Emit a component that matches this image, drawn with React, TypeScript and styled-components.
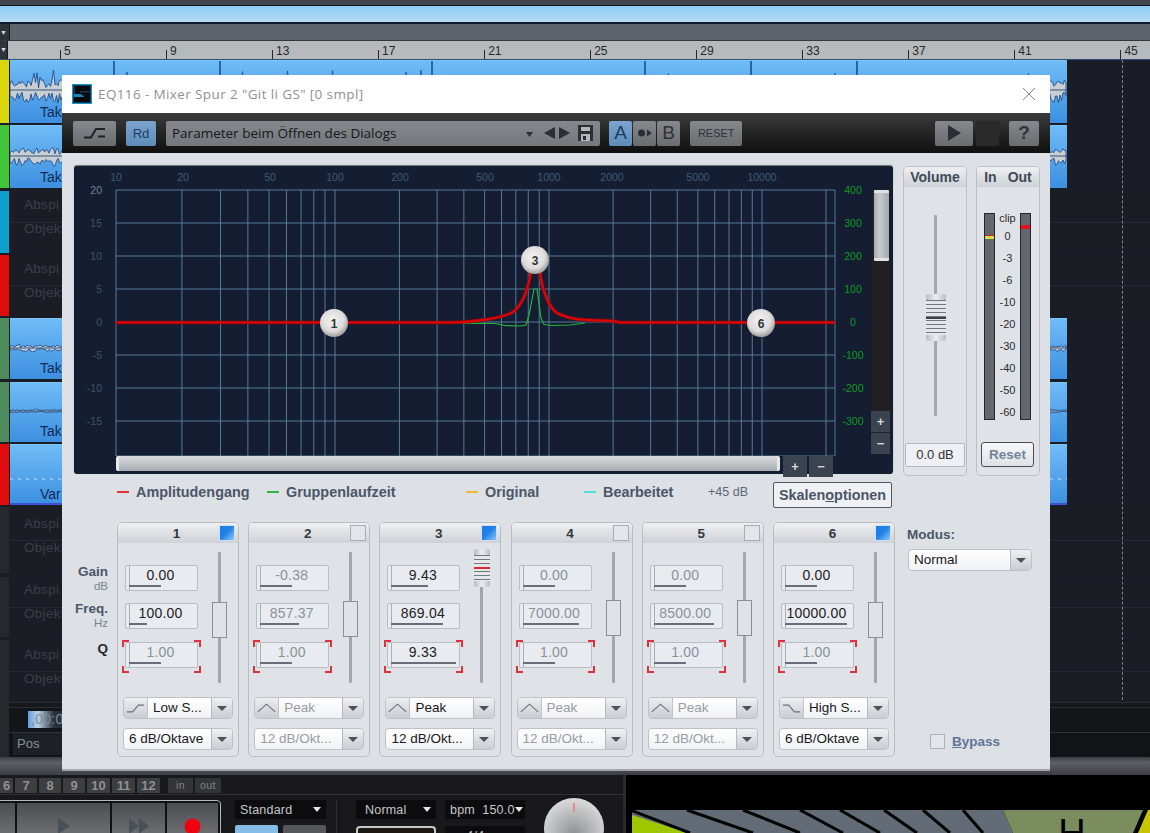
import React from 'react';
import styled, { createGlobalStyle } from 'styled-components';

const GlobalStyle = createGlobalStyle`
  html, body { margin: 0; padding: 0; background: #000; overflow: hidden; }
  body { font-family: "Liberation Sans", Arial, sans-serif; }
  * { box-sizing: border-box; }
`;

const LABEL = '#4b5668';

const corners = (c: string) => `
  linear-gradient(${c},${c}) left top/7px 2px no-repeat,
  linear-gradient(${c},${c}) left top/2px 7px no-repeat,
  linear-gradient(${c},${c}) right top/7px 2px no-repeat,
  linear-gradient(${c},${c}) right top/2px 7px no-repeat,
  linear-gradient(${c},${c}) left bottom/7px 2px no-repeat,
  linear-gradient(${c},${c}) left bottom/2px 7px no-repeat,
  linear-gradient(${c},${c}) right bottom/7px 2px no-repeat,
  linear-gradient(${c},${c}) right bottom/2px 7px no-repeat
`;

const S = {
  Desktop: styled.div`
    position: relative;
    width: 1150px;
    height: 833px;
    overflow: hidden;
    background: #1a1d25;
  `,
  TopStrip: styled.div`
    height: 24px;
    background: linear-gradient(#42464c 0 5px, #14161a 5px 6px, #8ecbf4 6px, #b4dcf4 22px, #101a2c 22px);
  `,
  GrayBar: styled.div`
    height: 17px;
    display: flex;
    background: #5e646d;
    border-bottom: 1px solid #33373d;
  `,
  CornerCell: styled.div`
    width: 10px;
    background: #30343a;
    border-right: 1px solid #16181c;
    color: #d5d8dc;
    font-size: 7px;
    line-height: 17px;
  `,
  Ruler: styled.div`
    height: 19px;
    display: flex;
    background: #b7babd;
    border-bottom: 1px solid #2e4d78;
  `,
  RulerTicks: styled.div`
    display: flex;
    padding-left: 52px;
  `,
  RulerMark: styled.div`
    width: 106.05px;
    height: 18px;
    padding: 3px 0 0 4px;
    font-size: 12px;
    line-height: 14px;
    color: #25282c;
    background: linear-gradient(#25282c, #25282c) left 9px/1px 9px no-repeat;
  `,
  Tracks: styled.div`
    height: 642px;
    display: flex;
    flex-direction: column;
  `,
  Row: styled.div<{ $h: number; $gap: number }>`
    height: ${(p) => p.$h}px;
    margin-bottom: ${(p) => p.$gap}px;
    display: flex;
    flex: none;
  `,
  Strip: styled.div<{ $c: string }>`
    width: 9px;
    margin-right: 1px;
    background: ${(p) => p.$c};
  `,
  Lane: styled.div<{ $pt: number }>`
    flex: 1;
    padding: ${(p) => p.$pt}px 0 0 14px;
    background: linear-gradient(#262931, #262931) 0 50%/100% 1px no-repeat, #1b1d24;
    color: #3b3f4a;
    font-size: 13.5px;
    line-height: 24px;
    letter-spacing: 0.3px;
    white-space: pre-line;
  `,
  Clip: styled.div`
    width: 1057px;
    display: grid;
    background: linear-gradient(#6fbcf7, #3d8fe0);
    border-top: 1px solid #7dc6f8;
    & > * { grid-area: 1 / 1; }
  `,
  ClipLabel: styled.div`
    align-self: end;
    padding: 0 0 3px 30px;
    font-size: 14px;
    line-height: 16px;
    color: #0e2c58;
  `,
  Dashed: styled.div`
    position: absolute;
    left: 1122px;
    top: 60px;
    height: 640px;
    border-left: 1px dashed #7c828a;
  `,
  Transportline: styled.div`
    height: 55px;
    display: flex;
    background: linear-gradient(#2a2d33 0 1px, #17181c 1px 5px, #2a2d33 5px 6px, #141519 6px 30px, #30333a 30px 31px, #121317 31px);
  `,
  TimeCol: styled.div`
    padding: 9px 0 0 3px;
    width: 1000px;
    display: flex;
    flex-direction: column;
    gap: 5px;
  `,
  TimeBox: styled.div`
    margin-left: 15px;
    width: 120px;
    height: 17px;
    padding-left: 3px;
    background: linear-gradient(90deg, #5f9ed8, #b9d3e6 10px, #27303a 26px);
    color: #7d8996;
    font-size: 14px;
    line-height: 17px;
    letter-spacing: 0.3px;
  `,
  PosBox: styled.div`
    margin-left: 0;
    width: 120px;
    height: 22px;
    padding-left: 4px;
    background: #1d2025;
    color: #8a929c;
    font-size: 13px;
    line-height: 22px;
  `,
  GrayStrip: styled.div`
    height: 18px;
    background: linear-gradient(#3a3d42, #5c6066 30%, #3b3e43);
  `,
  Bottom: styled.div`
    height: 58px;
    display: flex;
    background: #000;
  `,
  BottomLeft: styled.div`
    width: 626px;
    flex: none;
    overflow: hidden;
    background: #19191b;
    border-right: 3px solid #2a2a2c;
  `,
  TabRow: styled.div`
    height: 20px;
    padding-top: 3px;
    display: flex;
    border-bottom: 1px solid #333;
  `,
  TabCell: styled.div<{ $w: number; $ml?: number }>`
    width: ${(p) => p.$w}px;
    margin-left: ${(p) => p.$ml ?? 1}px;
    height: 15px;
    background: #3d3e41;
    color: #8f9093;
    font-size: 13px;
    font-weight: 700;
    line-height: 15px;
    text-align: center;
  `,
  TabCellSmall: styled.div<{ $w: number; $ml?: number }>`
    width: ${(p) => p.$w}px;
    margin-left: ${(p) => p.$ml ?? 1}px;
    height: 15px;
    background: #333437;
    color: #808185;
    font-size: 10.5px;
    line-height: 15px;
    text-align: center;
    letter-spacing: 0.5px;
  `,
  Controls: styled.div`
    display: flex;
    padding-top: 5px;
  `,
  Transport: styled.div`
    width: 224px;
    height: 60px;
    margin-left: -3px;
    padding: 2px 2px 0;
    flex: none;
    display: flex;
    gap: 2px;
    border: 1px solid #b5b7b9;
    border-radius: 4px;
    background: #111;
  `,
  TransportBtn: styled.div<{ $w: number }>`
    width: ${(p) => p.$w}px;
    height: 50px;
    padding-top: 15px;
    display: flex;
    justify-content: center;
    background: linear-gradient(#4c4d50, #66686b 50%, #76787b);
  `,
  DarkSelectCol: styled.div`
    width: 92px;
    margin-left: 14px;
    flex: none;
    display: flex;
    flex-direction: column;
    gap: 6px;
  `,
  DarkSelect: styled.div<{ $w: number; $pl?: number }>`
    width: ${(p) => p.$w}px;
    height: 19px;
    padding: 0 5px 0 ${(p) => p.$pl ?? 5}px;
    flex: none;
    display: flex;
    justify-content: space-between;
    align-items: center;
    background: #0c0c0e;
    color: #c5c7ca;
    font-size: 12.5px;
    letter-spacing: 0.2px;
    white-space: pre;
    &::after {
      content: '';
      border: 4px solid transparent;
      border-top: 5px solid #e5e5e5;
      border-bottom: 0;
    }
  `,
  SmallButtons: styled.div`
    display: flex;
    gap: 5px;
  `,
  SmallBtn: styled.div<{ $bg: string }>`
    width: 43px;
    height: 12px;
    border-radius: 2px 2px 0 0;
    background: ${(p) => p.$bg};
  `,
  Divider: styled.div`
    width: 1px;
    height: 40px;
    margin-left: 9px;
    background: #303033;
    flex: none;
  `,
  MidCol: styled.div`
    margin-left: 19px;
    width: 170px;
    flex: none;
    display: flex;
    flex-wrap: wrap;
    column-gap: 9px;
    row-gap: 7px;
    align-content: flex-start;
  `,
  Display: styled.div`
    width: 80px;
    height: 14px;
    border: 2px solid #c8c8c8;
    border-bottom: 0;
    border-radius: 4px 4px 0 0;
    background: #1c1710;
  `,
  Knob: styled.div`
    width: 60px;
    height: 60px;
    margin: -2px 0 0 18px;
    flex: none;
    border-radius: 50%;
    background: radial-gradient(circle at 50% 60%, #8f9092, #c5c6c8 55%, #f2f2f2);
    display: flex;
    justify-content: center;
    padding-top: 5px;
    &::after {
      content: '';
      width: 2px;
      height: 9px;
      background: #e28b8b;
    }
  `,
  BottomArt: styled.div`
    flex: 1;
    padding-left: 4px;
    display: flex;
    align-items: flex-end;
  `,

  Dialog: styled.div`
    position: absolute;
    left: 62px;
    top: 75px;
    width: 988px;
    height: 696px;
    display: flex;
    flex-direction: column;
    background: #dde0e5;
    border-bottom: 2px solid #a2a6ab;
  `,
  TitleBar: styled.div`
    height: 38px;
    flex: none;
    padding: 0 14px 0 10px;
    display: flex;
    align-items: center;
    background: #fff;
  `,
  TitleText: styled.div`
    margin-left: 6px;
    flex: 1;
    font-family: "Open Sans", "Liberation Sans", sans-serif;
    font-size: 13.5px;
    color: #919191;
    letter-spacing: 0.38px;
  `,
  Toolbar: styled.div`
    height: 40px;
    flex: none;
    padding: 0 11px;
    display: flex;
    align-items: center;
    background: linear-gradient(#3b3b3b, #0f0f0f);
  `,
  ToolBtn: styled.div<{ $w: number; $ml?: number; $blue?: boolean }>`
    width: ${(p) => p.$w}px;
    margin-left: ${(p) => p.$ml ?? 0}px;
    height: 25px;
    flex: none;
    display: flex;
    align-items: center;
    justify-content: center;
    border-radius: 2px;
    background: ${(p) => (p.$blue ? 'linear-gradient(#7ba4cf, #5f8cbb)' : 'linear-gradient(#85888c, #6a6c70)')};
    color: ${(p) => (p.$blue ? '#1d3c60' : '#2f3236')};
    font-size: 13px;
  `,
  ResetText: styled.span`
    font-size: 11.5px;
    transform: scaleX(0.95);
  `,
  AbLetter: styled.span`
    font-size: 19px;
  `,
  HelpMark: styled.span`
    font-size: 19px;
    font-weight: 700;
  `,
  DimBtn: styled.div<{ $ml: number }>`
    width: 23px;
    height: 25px;
    margin-left: ${(p) => p.$ml}px;
    flex: none;
    background: #2a2a2a;
  `,
  Combo: styled.div`
    width: 434px;
    height: 25px;
    margin-left: 10px;
    flex: none;
    padding: 0 4px 0 6px;
    display: flex;
    align-items: center;
    gap: 4px;
    border-radius: 2px;
    background: linear-gradient(#85888c, #74777b);
    color: #15171a;
    font-family: "Open Sans", "Liberation Sans", sans-serif;
    font-size: 13.5px;
  `,
  ComboText: styled.div`
    flex: 1;
  `,
  AbGroup: styled.div`
    display: flex;
    gap: 1px;
    margin-left: 9px;
  `,
  Spacer: styled.div`
    flex: 1;
  `,
  Body: styled.div`
    flex: 1;
    padding: 13px 0 0 12px;
    display: flex;
    flex-direction: column;
  `,
  UpperRow: styled.div`
    display: flex;
    height: 310px;
  `,
  Graph: styled.div`
    width: 819px;
    height: 308px;
    flex: none;
    display: grid;
    grid-template-columns: 797px 19px;
    grid-template-rows: 290px 17px;
    border-radius: 3px;
    background: #151d33;
    box-shadow: 0 -1px 1px #6e7278;
  `,
  VScroll: styled.div`
    margin-top: 24px;
    display: flex;
    flex-direction: column;
    gap: 1px;
    background: #211f22;
    margin-bottom: 2px;
  `,
  VTrack: styled.div`
    flex: 1;
    padding-left: 3px;
  `,
  VThumb: styled.div`
    width: 15px;
    height: 71px;
    border-radius: 1px;
    background: linear-gradient(90deg, #a9adb4, #c7cbd0 40%, #a4a8ae);
    border-top: 3px solid #dfe1e3;
    border-bottom: 3px solid #dfe1e3;
  `,
  ScrollBtn: styled.div<{ $w?: number }>`
    width: ${(p) => p.$w ?? 19}px;
    height: 21px;
    flex: none;
    display: flex;
    align-items: center;
    justify-content: center;
    background: #3b4250;
    color: #d5d9de;
    font-size: 13px;
    font-weight: 700;
  `,
  HScroll: styled.div`
    grid-column: 1 / 3;
    padding-left: 42px;
    display: flex;
    gap: 2px;
  `,
  HThumb: styled.div`
    width: 664px;
    height: 15px;
    margin-right: 1px;
    border-radius: 2px;
    background: linear-gradient(#dadcde, #a8acb0);
    border-left: 3px solid #e9eaec;
    border-right: 3px solid #e9eaec;
  `,
  SidePanel: styled.div<{ $ml: number }>`
    width: 64px;
    height: 310px;
    margin-left: ${(p) => p.$ml}px;
    flex: none;
    border: 1px solid #bcc0c6;
    border-radius: 5px;
    background: #dfe2e6;
  `,
  SideHead: styled.div`
    height: 20px;
    display: flex;
    align-items: center;
    justify-content: center;
    gap: 11px;
    border-radius: 4px 4px 0 0;
    background: linear-gradient(#eef0f2, #ced1d6);
    color: #3f4a58;
    font-size: 14px;
    font-weight: 700;
  `,
  VolumeArea: styled.div`
    position: relative;
    height: 201px;
    margin: 28px 0 27px;
    display: flex;
    justify-content: center;
  `,
  Track: styled.div`
    width: 3px;
    height: 100%;
    border-radius: 1px;
    background: #a2a7ae;
  `,
  FaderCap: styled.div<{ $w: number; $h: number; $top: number; $left: number }>`
    position: absolute;
    top: ${(p) => p.$top}px;
    left: ${(p) => p.$left}px;
    width: ${(p) => p.$w}px;
    height: ${(p) => p.$h}px;
    padding: 6px 0;
    display: flex;
    border-radius: 2px;
    background: linear-gradient(90deg, #b9bdc4, #eceef0 50%, #b9bdc4);
  `,
  FaderStripes: styled.div<{ $mark: string }>`
    flex: 1;
    background:
      linear-gradient(${(p) => p.$mark}, ${(p) => p.$mark}) center / 100% 2px no-repeat,
      repeating-linear-gradient(#72777f 0 1.5px, #e4e6e9 1.5px 4px);
  `,
  ValueBox: styled.div`
    width: 60px;
    height: 24px;
    margin-left: 1px;
    border: 1px solid #b4b8be;
    border-radius: 2px;
    background: #eef0f3;
    color: #333;
    font-size: 13px;
    line-height: 22px;
    text-align: center;
  `,
  MeterArea: styled.div`
    height: 207px;
    margin: 26px 0 22px;
    padding-left: 7px;
    display: flex;
  `,
  Meter: styled.div`
    width: 11px;
    height: 100%;
    flex: none;
    border: 1px solid #25272b;
    background: #63676e;
  `,
  MeterMark: styled.div<{ $top: number; $bg: string; $h: number }>`
    height: ${(p) => p.$h}px;
    margin-top: ${(p) => p.$top}px;
    background: ${(p) => p.$bg};
  `,
  Scale: styled.div`
    width: 25px;
    flex: none;
    display: flex;
    flex-direction: column;
    align-items: center;
    color: #2a2c30;
    font-size: 11px;
  `,
  ScaleClip: styled.div`
    height: 11px;
    margin-bottom: 1px;
    line-height: 11px;
  `,
  ScaleTick: styled.div`
    height: 22px;
    line-height: 22px;
  `,
  ResetBtn: styled.div`
    width: 53px;
    height: 25px;
    margin-left: 4px;
    border: 1px solid #4a4d52;
    border-radius: 3px;
    background: linear-gradient(#f6f7f8, #dfe2e6);
    color: #72839a;
    font-size: 13.5px;
    font-weight: 700;
    line-height: 23px;
    text-align: center;
  `,
  Legend: styled.div`
    height: 26px;
    margin-top: 6px;
    padding-left: 43px;
    display: flex;
  `,
  LegendItem: styled.div<{ $w: number }>`
    width: ${(p) => p.$w}px;
    height: 20px;
    flex: none;
    display: flex;
    align-items: center;
    gap: 7px;
    color: ${LABEL};
    font-size: 14.4px;
    font-weight: 700;
  `,
  LegendDash: styled.span<{ $c: string }>`
    width: 12px;
    height: 2px;
    background: ${(p) => p.$c};
  `,
  LegendPlain: styled.span`
    color: #5d6777;
    font-size: 12.5px;
    font-weight: 400;
  `,
  ScaleOptions: styled.div`
    width: 119px;
    height: 26px;
    flex: none;
    border: 1px solid #54585e;
    border-radius: 2px;
    background: #eef0f3;
    color: ${LABEL};
    font-size: 14.4px;
    font-weight: 700;
    line-height: 24px;
    text-align: center;
    white-space: nowrap;
  `,
  LowerRow: styled.div`
    margin-top: 14px;
    display: flex;
  `,
  RowLabels: styled.div`
    width: 43px;
    flex: none;
    padding: 42px 9px 0 0;
    display: flex;
    flex-direction: column;
    align-items: flex-end;
    font-size: 13.5px;
    font-weight: 700;
    color: ${LABEL};
  `,
  RowLabel: styled.div`
    height: 37px;
    line-height: 15px;
    text-align: right;
    white-space: nowrap;
  `,
  RowUnit: styled.div`
    color: #7b8290;
    font-size: 11.5px;
    font-weight: 400;
  `,
  RowQ: styled.div`
    height: 15px;
    margin-top: 3px;
    line-height: 15px;
    color: #23272e;
  `,
  Bands: styled.div`
    display: grid;
    grid-template-columns: repeat(6, 122px);
    column-gap: 9.2px;
  `,
  Band: styled.div`
    height: 235px;
    border: 1px solid #b9bdc3;
    border-radius: 5px;
    background: #dfe2e6;
  `,
  BandHead: styled.div`
    height: 20px;
    padding-right: 3px;
    display: grid;
    grid-template-columns: 1fr auto 1fr;
    align-items: center;
    border-radius: 4px 4px 0 0;
    background: linear-gradient(#eef0f2, #ced1d6);
    color: #33373d;
    font-size: 13.5px;
    font-weight: 700;
  `,
  Check: styled.div<{ $on: boolean }>`
    width: 16px;
    height: 16px;
    justify-self: end;
    border: 1px solid ${(p) => (p.$on ? '#cfe0f2' : '#a9adb3')};
    background: ${(p) => (p.$on ? 'linear-gradient(135deg, #1f7fe6 45%, #8ac6f7)' : '#e2e5e9')};
  `,
  BandMain: styled.div`
    height: 140px;
    padding-left: 7px;
    display: flex;
  `,
  Fields: styled.div`
    width: 73px;
    padding-top: 22px;
    display: flex;
    flex-direction: column;
    gap: 12px;
    flex: none;
  `,
  Field: styled.div<{ $dim?: boolean }>`
    position: relative;
    width: 73px;
    height: 26px;
    padding-right: 2px;
    border: 1px solid #b9bdc4;
    border-radius: 2px;
    background: linear-gradient(90deg, #a9adb5 0 1px, transparent 1px) 3px 0 no-repeat, #e8ebef;
    color: ${(p) => (p.$dim ? '#8c919a' : '#1f2226')};
    font-size: 14px;
    letter-spacing: 0.2px;
    line-height: 19px;
    text-align: center;
  `,
  FieldBar: styled.div<{ $w: number }>`
    position: absolute;
    left: 3px;
    bottom: 3px;
    width: ${(p) => p.$w}px;
    height: 2px;
    background: #696d7a;
  `,
  QFrame: styled.div`
    margin: -1px -3px -5px;
    padding: 2px 3px 5px;
    background: ${corners('#e0303c')};
  `,
  SliderCol: styled.div`
    position: relative;
    width: 15px;
    height: 131px;
    margin: 9px 0 0 14px;
    display: flex;
    justify-content: center;
    flex: none;
  `,
  PlainThumb: styled.div<{ $top: number }>`
    position: absolute;
    top: ${(p) => p.$top}px;
    left: 0;
    width: 15px;
    height: 36px;
    border: 1px solid #8a8f97;
    background: #dfe2e6;
  `,
  Select: styled.div<{ $dim?: boolean; $w?: number; $mt: number }>`
    width: ${(p) => p.$w ?? 110}px;
    height: 22px;
    margin: ${(p) => p.$mt}px 0 0 5px;
    display: flex;
    overflow: hidden;
    border: 1px solid #bec2c8;
    border-radius: 4px;
    background: linear-gradient(#fff, #f1f2f4);
    color: ${(p) => (p.$dim ? '#979ca5' : '#17191c')};
    font-size: 13.5px;
    line-height: 20px;
  `,
  SelectIcon: styled.div`
    width: 24px;
    flex: none;
    display: flex;
    align-items: center;
    justify-content: center;
    background: linear-gradient(#eceef0, #c9ccd2);
    border-right: 1px solid #c0c4c9;
  `,
  SelectText: styled.div`
    flex: 1;
    padding-left: 5px;
    white-space: nowrap;
  `,
  SelectArrow: styled.div`
    width: 21px;
    flex: none;
    display: flex;
    align-items: center;
    justify-content: center;
    background: linear-gradient(#eff0f2, #c9ccd2);
    border-left: 1px solid #b5b9bf;
    &::after {
      content: '';
      border: 5px solid transparent;
      border-top: 5px solid #4d5158;
      border-bottom: 0;
    }
  `,
  ModusCol: styled.div`
    margin-left: 12px;
    height: 235px;
    flex: 1;
    padding-top: 5px;
    display: flex;
    flex-direction: column;
  `,
  ModusLabel: styled.div`
    color: ${LABEL};
    font-size: 13.5px;
    font-weight: 700;
    line-height: 16px;
    margin-bottom: 6px;
  `,
  ModusSelect: styled.div`
    margin-left: -4px;
  `,
  BypassRow: styled.div`
    margin: auto 0 8px 23px;
    display: flex;
    align-items: center;
    gap: 7px;
    color: #5f7597;
    font-size: 13.5px;
    font-weight: 700;
  `,
  BypassBox: styled.div`
    width: 15px;
    height: 15px;
    border: 1px solid #adb1b7;
    background: #e2e5e9;
  `,
};

// seeded noise so the waveform stays the same on each run
const wavePath = (seed: number, width: number, center: number, amp: number) => {
  let s = seed;
  const rnd = () => {
    s = (s * 16807) % 2147483647;
    return s / 2147483647;
  };
  const top: string[] = [];
  const bottom: string[] = [];
  for (let x = 0; x <= width; x += 1.5) {
    const spike = rnd() > 0.95 ? 1.9 : 1;
    const up = (0.15 + rnd() * 0.6) * amp * spike;
    const down = (0.15 + rnd() * 0.8) * amp;
    top.push(`${x},${(center - up).toFixed(1)}`);
    bottom.unshift(`${x},${(center + down).toFixed(1)}`);
  }
  return `M${top.join(' L')} L${bottom.join(' L')} Z`;
};

type WaveProps = { seed: number; h: number; center: number; amp: number; cuts?: boolean };

function Wave({ seed, h, center, amp, cuts }: WaveProps) {
  return (
    <svg width={1057} height={h} viewBox={`0 0 1057 ${h}`}>
      {amp > 0 ? (
        <>
          <path d={wavePath(seed, 1057, center, amp)} fill="#c9ced3" stroke="#1f4f8c" strokeWidth={0.9} />
          <line x1={0} x2={1057} y1={center} y2={center} stroke="#33557f" strokeWidth={1} />
        </>
      ) : (
        <>
          <line x1={0} x2={1057} y1={center} y2={center} stroke="#c5dcf2" strokeWidth={1} strokeDasharray="3 5" />
          <line x1={0} x2={1057} y1={h - 1} y2={h - 1} stroke="#3b3fd8" strokeWidth={1.5} />
        </>
      )}
      {cuts &&
        [104, 210, 422, 635, 741, 847].map((x) => (
          <line key={x} x1={x} x2={x} y1={0} y2={h} stroke="#17488c" strokeWidth={1.5} />
        ))}
    </svg>
  );
}

const tracks = [
  { color: '#dcd60c', h: 63, gap: 2, clip: { amp: 14, center: 29, label: 'Tak', cuts: true } },
  { color: '#43c53a', h: 63, gap: 3, clip: { amp: 11, center: 30, label: 'Tak', cuts: true } },
  { color: '#0c9fd0', h: 62, gap: 2, text: 'Abspi\nObjekt', pt: 2 },
  { color: '#e00c0c', h: 61, gap: 2, text: 'Abspi\nObjekt', pt: 2 },
  { color: '#4d8a5c', h: 61, gap: 3, clip: { amp: 4, center: 29, label: 'Tak' } },
  { color: '#4d8a5c', h: 60, gap: 2, clip: { amp: 2, center: 28, label: 'Tak' } },
  { color: '#e00c0c', h: 61, gap: 2, clip: { amp: 0, center: 34, label: 'Var' } },
  { color: '#25282d', h: 66, gap: 4, text: 'Abspi\nObjekt', pt: 5 },
  { color: '#25282d', h: 60, gap: 3, text: 'Abspi\nObjekt', pt: 1 },
  { color: '#25282d', h: 62, gap: 0, text: 'Abspi\nObjekt', pt: 3 },
];

const rulerMarks = [5, 9, 13, 17, 21, 25, 29, 33, 37, 41, 45];

const decades = [116, 335, 549, 762];
const gridX: number[] = [];
decades.slice(0, 3).forEach((start, i) => {
  const span = decades[i + 1] - start;
  for (let k = 1; k < 10; k++) gridX.push(start + Math.log10(k) * span);
});
gridX.push(762, 826, 835);
const gridY = [190, 223, 256, 289, 322, 355, 388, 421, 456];

const topLabels: [string, number][] = [
  ['10', 116], ['20', 183], ['50', 270], ['100', 335], ['200', 400],
  ['500', 485], ['1000', 549], ['2000', 612], ['5000', 698], ['10000', 762],
];
const leftLabels: [string, number][] = [
  ['20', 190], ['15', 223], ['10', 256], ['5', 289], ['0', 322], ['-5', 355], ['-10', 388], ['-15', 421],
];
const rightLabels: [string, number][] = [
  ['400', 190], ['300', 223], ['200', 256], ['100', 289], ['0', 322], ['-100', 355], ['-200', 388], ['-300', 421],
];

const nodes: [string, number, number][] = [
  ['1', 334, 323],
  ['3', 535, 260],
  ['6', 761, 323],
];

const RED_CURVE =
  'M116 322.5 L453 322.5 C470 322 480 320.5 490 319 C500 317 508 315 513 312 C518 308 521 304 524 297 C527 290 529 283 531 272 L533 262 L538 262 L540 272 C541 283 544 292 547 299 C550 306 553 310 557 313 C563 316 570 318.5 580 319.5 C590 320.5 605 320.5 613 321 L620 322.5 L835 322.5';
const GREEN_CURVE =
  'M453 323.5 L495 323.5 L505 325.5 L520 326 L526 325 L529 315 L534 289 L537 289 L541 318 L544 324.5 L552 325.5 L570 325 L585 323';

function EqChart() {
  return (
    <svg width={797} height={290} viewBox="74 166 797 290">
      <defs>
        <radialGradient id="ball" cx="45%" cy="40%" r="62%">
          <stop offset="0%" stopColor="#f4f3f3" />
          <stop offset="65%" stopColor="#dddbdb" />
          <stop offset="100%" stopColor="#989696" />
        </radialGradient>
      </defs>
      {gridX.map((x) => (
        <line key={x} x1={x} x2={x} y1={190} y2={456} stroke="#557a9a" strokeWidth={1} />
      ))}
      {gridY.map((y) => (
        <line key={y} x1={116} x2={835} y1={y} y2={y} stroke="#557a9a" strokeWidth={1} />
      ))}
      <g fontFamily="Liberation Sans, sans-serif" fontSize={10.5}>
        {topLabels.map(([t, x]) => (
          <text key={t} x={x} y={181} textAnchor="middle" fill="#3f5a78">{t}</text>
        ))}
        {leftLabels.map(([t, y]) => (
          <text key={t} x={102} y={y + 3.5} textAnchor="end" fill={t === '20' ? '#6f8296' : '#3f5268'}>{t}</text>
        ))}
        {rightLabels.map(([t, y]) => (
          <text key={t} x={853} y={y + 3.5} textAnchor="middle" fill="#0f9a1e">{t}</text>
        ))}
      </g>
      <path d={GREEN_CURVE} fill="none" stroke="#22b53a" strokeWidth={1.2} />
      <path d={RED_CURVE} fill="none" stroke="#8a0a10" strokeWidth={3.4} />
      <path d={RED_CURVE} fill="none" stroke="#e00404" strokeWidth={2} />
      {nodes.map(([n, x, y]) => (
        <g key={n}>
          <circle cx={x} cy={y} r={14} fill="url(#ball)" />
          <text x={x} y={y + 4.5} textAnchor="middle" fontFamily="Liberation Sans, sans-serif" fontWeight={700} fontSize={12} fill="#333">{n}</text>
        </g>
      ))}
    </svg>
  );
}

const CurveIcon = ({ type }: { type: string }) => {
  const d = type === 'low' ? 'M3 15 L9 15 L15 8 L21 8' : type === 'high' ? 'M3 8 L9 8 L15 15 L21 15' : 'M3 15 L12 7 L21 15';
  return (
    <svg width={24} height={22} viewBox="0 0 24 22">
      <path d={d} fill="none" stroke="#6c7077" strokeWidth={1.2} />
    </svg>
  );
};

const bands = [
  { n: 1, on: true, gain: '0.00', gw: 32, freq: '100.00', fw: 18, q: '1.00', qw: 32, type: 'Low S...', icon: 'low', slope: '6 dB/Oktave', thumb: 50 },
  { n: 2, on: false, gain: '-0.38', gw: 32, freq: '857.37', fw: 39, q: '1.00', qw: 32, type: 'Peak', icon: 'peak', slope: '12 dB/Okt...', thumb: 49 },
  { n: 3, on: true, gain: '9.43', gw: 37, freq: '869.04', fw: 52, q: '9.33', qw: 65, type: 'Peak', icon: 'peak', slope: '12 dB/Okt...', thumb: -3 },
  { n: 4, on: false, gain: '0.00', gw: 32, freq: '7000.00', fw: 56, q: '1.00', qw: 32, type: 'Peak', icon: 'peak', slope: '12 dB/Okt...', thumb: 48 },
  { n: 5, on: false, gain: '0.00', gw: 32, freq: '8500.00', fw: 60, q: '1.00', qw: 32, type: 'Peak', icon: 'peak', slope: '12 dB/Okt...', thumb: 48 },
  { n: 6, on: true, gain: '0.00', gw: 32, freq: '10000.00', fw: 62, q: '1.00', qw: 32, type: 'High S...', icon: 'high', slope: '6 dB/Oktave', thumb: 50 },
];

function BandPanel({ band }: { band: (typeof bands)[number] }) {
  const dim = !band.on;
  const qDim = dim || band.n !== 3;
  return (
    <S.Band>
      <S.BandHead>
        <span />
        <span>{band.n}</span>
        <S.Check $on={band.on} />
      </S.BandHead>
      <S.BandMain>
        <S.Fields>
          <S.Field $dim={dim}>{band.gain}<S.FieldBar $w={band.gw} /></S.Field>
          <S.Field $dim={dim}>{band.freq}<S.FieldBar $w={band.fw} /></S.Field>
          <S.QFrame>
            <S.Field $dim={qDim}>{band.q}<S.FieldBar $w={band.qw} /></S.Field>
          </S.QFrame>
        </S.Fields>
        <S.SliderCol>
          <S.Track />
          {band.n === 3 ? (
            <S.FaderCap $w={16} $h={38} $top={band.thumb} $left={0}>
              <S.FaderStripes $mark="#d8283a" />
            </S.FaderCap>
          ) : (
            <S.PlainThumb $top={band.thumb} />
          )}
        </S.SliderCol>
      </S.BandMain>
      <S.Select $dim={dim} $mt={14}>
        <S.SelectIcon><CurveIcon type={band.icon} /></S.SelectIcon>
        <S.SelectText>{band.type}</S.SelectText>
        <S.SelectArrow />
      </S.Select>
      <S.Select $dim={dim} $mt={9}>
        <S.SelectText>{band.slope}</S.SelectText>
        <S.SelectArrow />
      </S.Select>
    </S.Band>
  );
}

const Logo = () => (
  <svg width={20} height={20} viewBox="0 0 20 20">
    <rect width={20} height={20} fill="#1497cf" />
    <rect x={1} y={1} width={18} height={18} fill="#123a55" />
    <path d="M3 2 H18 V7 H8 V8.5 H18 V18 H2 V13 H12 V11.5 H3 Z" fill="#07090c" />
    <path d="M2 10 H9 L12 13 H2 Z" fill="#1686c0" />
  </svg>
);

const Close = () => (
  <svg width={14} height={14} viewBox="0 0 14 14">
    <path d="M1 1 L13 13 M13 1 L1 13" stroke="#7a7a7a" strokeWidth={0.9} />
  </svg>
);

const ShelfIcon = () => (
  <svg width={24} height={12} viewBox="0 0 24 12">
    <path d="M1 10.5 H8 L13 2 H22" fill="none" stroke="#1f2226" strokeWidth={2} />
    <path d="M15 9.5 H22" stroke="#1f2226" strokeWidth={2} />
  </svg>
);

const NavIcons = () => (
  <svg width={71} height={20} viewBox="0 0 71 20">
    <path d="M1 9 H8 L4.5 14 Z M30 4 V16 L19 10 Z M34 4 V16 L45 10 Z" fill="#2b2e33" />
    <path d="M53 2 H68 V18 H53 Z" fill="#2b2e33" />
    <path d="M56 4 H65 V8 H56 Z M56 11 H65 V18 H56 Z" fill="#b4b7ba" />
    <path d="M58 13 H61 V17 H58 Z" fill="#2b2e33" />
  </svg>
);

const DotArrow = () => (
  <svg width={16} height={10} viewBox="0 0 16 10">
    <circle cx={4.5} cy={5} r={3.5} fill="#2b2e33" />
    <path d="M10 1.5 L15 5 L10 8.5 Z" fill="#2b2e33" />
  </svg>
);

const PlayIcon = () => (
  <svg width={16} height={18} viewBox="0 0 16 18">
    <path d="M2 1 L15 9 L2 17 Z" fill="#2b2e33" />
  </svg>
);

const Floor = () => (
  <svg width={520} height={23} viewBox="630 810 520 23">
    <path d="M632 810 H1003 L1013 833 H632 Z" fill="#626b76" />
    <path d="M632 815 L688 833 H632 Z" fill="#9fc700" />
    <g stroke="#000" strokeWidth={3}>
      <path d="M630 810 L690 833" />
      <path d="M687 810 L753 833" />
      <path d="M743 810 L800 833" />
      <path d="M800 810 L843 833" />
      <path d="M840 810 L880 833" />
      <path d="M884 810 L917 833" />
      <path d="M923 810 L950 833" />
      <path d="M963 810 L983 833" />
    </g>
    <path d="M1003 810 H1143 L1133 833 H1013 Z" fill="#7b8d5e" />
    <path d="M1148 810 H1150 V833 H1138 Z" fill="#c9c400" />
    <text x={1072} y={846} textAnchor="middle" fontFamily="Liberation Sans, sans-serif" fontSize={38} fill="#000">H</text>
  </svg>
);

function Background() {
  return (
    <>
      <S.TopStrip />
      <S.GrayBar><S.CornerCell>▼</S.CornerCell></S.GrayBar>
      <S.Ruler>
        <S.CornerCell>▼</S.CornerCell>
        <S.RulerTicks>
          {rulerMarks.map((m) => <S.RulerMark key={m}>{m}</S.RulerMark>)}
        </S.RulerTicks>
      </S.Ruler>
      <S.Tracks>
        {tracks.map((t, i) => (
          <S.Row key={i} $h={t.h} $gap={t.gap}>
            <S.Strip $c={t.color} />
            {t.clip ? (
              <S.Clip>
                <Wave seed={i * 97 + 11} h={t.h - 1} center={t.clip.center} amp={t.clip.amp} cuts={t.clip.cuts} />
                <S.ClipLabel>{t.clip.label}</S.ClipLabel>
              </S.Clip>
            ) : (
              <S.Lane $pt={t.pt ?? 2}>{t.text}</S.Lane>
            )}
          </S.Row>
        ))}
      </S.Tracks>
      <S.Dashed />
      <S.Transportline>
        <S.Strip $c="#25282d" />
        <S.TimeCol>
          <S.TimeBox>,00:00</S.TimeBox>
          <S.PosBox>Pos</S.PosBox>
        </S.TimeCol>
      </S.Transportline>
      <S.GrayStrip />
      <S.Bottom>
        <S.BottomLeft>
          <S.TabRow>
            <S.TabCell $w={13} $ml={0}>6</S.TabCell>
            {[7, 8, 9, 10, 11, 12].map((n) => (
              <S.TabCell key={n} $w={n > 9 ? 23 : 22} $ml={2}>{n}</S.TabCell>
            ))}
            <S.TabCellSmall $w={25} $ml={8}>in</S.TabCellSmall>
            <S.TabCellSmall $w={26} $ml={2}>out</S.TabCellSmall>
          </S.TabRow>
          <S.Controls>
            <S.Transport>
              <S.TransportBtn $w={15} />
              <S.TransportBtn $w={93}>
                <svg width={14} height={16} viewBox="0 0 14 16"><path d="M1 0 L13 8 L1 16 Z" fill="#4a5058" /></svg>
              </S.TransportBtn>
              <S.TransportBtn $w={53}>
                <svg width={22} height={16} viewBox="0 0 22 16"><path d="M1 0 L11 8 L1 16 Z M11 0 L21 8 L11 16 Z" fill="#4a5058" /></svg>
              </S.TransportBtn>
              <S.TransportBtn $w={51}>
                <svg width={17} height={17} viewBox="0 0 17 17"><circle cx={8.5} cy={8.5} r={8} fill="#f00010" /></svg>
              </S.TransportBtn>
            </S.Transport>
            <S.DarkSelectCol>
              <S.DarkSelect $w={91}>Standard</S.DarkSelect>
              <S.SmallButtons>
                <S.SmallBtn $bg="#86bde8" />
                <S.SmallBtn $bg="#55575a" />
              </S.SmallButtons>
            </S.DarkSelectCol>
            <S.Divider />
            <S.MidCol>
              <S.DarkSelect $w={80} $pl={9}>Normal</S.DarkSelect>
              <S.DarkSelect $w={80}>bpm  150.0</S.DarkSelect>
              <S.Display />
              <S.DarkSelect $w={80}>♩ 4/4</S.DarkSelect>
            </S.MidCol>
            <S.Knob />
          </S.Controls>
        </S.BottomLeft>
        <S.BottomArt><Floor /></S.BottomArt>
      </S.Bottom>
    </>
  );
}

function EqDialog() {
  return (
    <S.Dialog>
      <S.TitleBar>
        <Logo />
        <S.TitleText>EQ116 - Mixer Spur 2 "Git li GS" [0 smpl]</S.TitleText>
        <Close />
      </S.TitleBar>
      <S.Toolbar>
        <S.ToolBtn $w={43}><ShelfIcon /></S.ToolBtn>
        <S.ToolBtn $w={30} $ml={10} $blue>Rd</S.ToolBtn>
        <S.Combo>
          <S.ComboText>Parameter beim Öffnen des Dialogs</S.ComboText>
          <NavIcons />
        </S.Combo>
        <S.AbGroup>
          <S.ToolBtn $w={23} $blue><S.AbLetter>A</S.AbLetter></S.ToolBtn>
          <S.ToolBtn $w={23}><DotArrow /></S.ToolBtn>
          <S.ToolBtn $w={23}><S.AbLetter>B</S.AbLetter></S.ToolBtn>
        </S.AbGroup>
        <S.ToolBtn $w={52} $ml={10}><S.ResetText>RESET</S.ResetText></S.ToolBtn>
        <S.Spacer />
        <S.ToolBtn $w={38}><PlayIcon /></S.ToolBtn>
        <S.DimBtn $ml={3} />
        <S.ToolBtn $w={30} $ml={10}><S.HelpMark>?</S.HelpMark></S.ToolBtn>
      </S.Toolbar>
      <S.Body>
        <S.UpperRow>
          <S.Graph>
            <EqChart />
            <S.VScroll>
              <S.VTrack><S.VThumb /></S.VTrack>
              <S.ScrollBtn>+</S.ScrollBtn>
              <S.ScrollBtn>−</S.ScrollBtn>
            </S.VScroll>
            <S.HScroll>
              <S.HThumb />
              <S.ScrollBtn $w={24}>+</S.ScrollBtn>
              <S.ScrollBtn $w={24}>−</S.ScrollBtn>
            </S.HScroll>
          </S.Graph>
          <S.SidePanel $ml={10}>
            <S.SideHead>Volume</S.SideHead>
            <S.VolumeArea>
              <S.Track />
              <S.FaderCap $w={20} $h={47} $top={79} $left={22}>
                <S.FaderStripes $mark="#3c4150" />
              </S.FaderCap>
            </S.VolumeArea>
            <S.ValueBox>0.0 dB</S.ValueBox>
          </S.SidePanel>
          <S.SidePanel $ml={9}>
            <S.SideHead><span>In</span><span>Out</span></S.SideHead>
            <S.MeterArea>
              <S.Meter>
                <S.MeterMark $top={21} $h={1} $bg="#d81820" />
                <S.MeterMark $top={0} $h={3} $bg="#d8e04a" />
              </S.Meter>
              <S.Scale>
                <S.ScaleClip>clip</S.ScaleClip>
                {['0', '-3', '-6', '-10', '-20', '-30', '-40', '-50', '-60'].map((t) => (
                  <S.ScaleTick key={t}>{t}</S.ScaleTick>
                ))}
              </S.Scale>
              <S.Meter>
                <S.MeterMark $top={11} $h={4} $bg="#e8101c" />
              </S.Meter>
            </S.MeterArea>
            <S.ResetBtn>Reset</S.ResetBtn>
          </S.SidePanel>
        </S.UpperRow>
        <S.Legend>
          <S.LegendItem $w={150}><S.LegendDash $c="#e03030" />Amplitudengang</S.LegendItem>
          <S.LegendItem $w={199}><S.LegendDash $c="#2fb84a" />Gruppenlaufzeit</S.LegendItem>
          <S.LegendItem $w={118}><S.LegendDash $c="#edbb3c" />Original</S.LegendItem>
          <S.LegendItem $w={124}><S.LegendDash $c="#4fe0d8" />Bearbeitet</S.LegendItem>
          <S.LegendItem $w={65}><S.LegendPlain>+45 dB</S.LegendPlain></S.LegendItem>
          <S.ScaleOptions>Skalen<u>o</u>ptionen</S.ScaleOptions>
        </S.Legend>
        <S.LowerRow>
          <S.RowLabels>
            <S.RowLabel>Gain<S.RowUnit>dB</S.RowUnit></S.RowLabel>
            <S.RowLabel>Freq.<S.RowUnit>Hz</S.RowUnit></S.RowLabel>
            <S.RowQ>Q</S.RowQ>
          </S.RowLabels>
          <S.Bands>
            {bands.map((b) => <BandPanel key={b.n} band={b} />)}
          </S.Bands>
          <S.ModusCol>
            <S.ModusLabel>Modus:</S.ModusLabel>
            <S.ModusSelect>
              <S.Select $w={124} $mt={0}>
                <S.SelectText>Normal</S.SelectText>
                <S.SelectArrow />
              </S.Select>
            </S.ModusSelect>
            <S.BypassRow>
              <S.BypassBox />
              <span><u>B</u>ypass</span>
            </S.BypassRow>
          </S.ModusCol>
        </S.LowerRow>
      </S.Body>
    </S.Dialog>
  );
}

export default function App() {
  return (
    <S.Desktop>
      <GlobalStyle />
      <Background />
      <EqDialog />
    </S.Desktop>
  );
}
